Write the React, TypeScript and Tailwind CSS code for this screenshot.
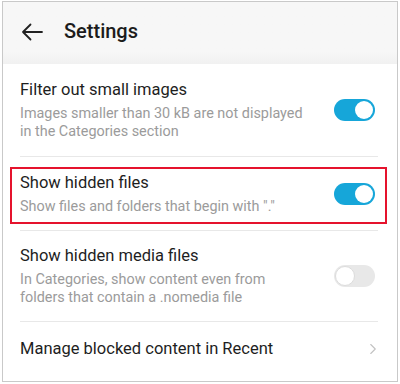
import { ChevronRight } from "lucide-react";

function Toggle({ on }: { on: boolean }) {
  return on ? (
    <div className="w-[41px] h-[22px] rounded-full bg-[#16a6d9] flex items-center justify-end pr-[2px]">
      <div className="w-[18px] h-[18px] rounded-full bg-white" />
    </div>
  ) : (
    <div className="w-[41px] h-[22px] rounded-full bg-[#e8e8e8] flex items-center pl-[1px]">
      <div className="w-[20px] h-[20px] rounded-full bg-white border border-[#dcdcdc]" />
    </div>
  );
}

function Text({ title, desc }: { title: string; desc?: string[] }) {
  return (
    <div className="flex-1 flex flex-col">
      <span className="text-[16.5px] leading-[22px] text-[#1e1e1e]">{title}</span>
      {desc && (
        <span className="text-[14.4px] leading-[18px] text-[#9b9b9b] mt-[4px]">
          {desc.map((d) => (
            <span key={d} className="block">
              {d}
            </span>
          ))}
        </span>
      )}
    </div>
  );
}

function Divider() {
  return <div className="ml-[10px] mr-[9px] h-px bg-[#e8e8e8]" />;
}

export default function App() {
  return (
    <div
      className="w-[400px] h-[384px] bg-white pt-[1px] pl-[2px]"
      style={{ fontFamily: "Roboto, 'Liberation Sans', sans-serif" }}
    >
      <div className="w-[396px] h-[381px] border border-[#c9c9c9] flex flex-col overflow-hidden">
        {/* Header */}
        <div className="h-[62px] bg-gradient-to-b from-[#f7f7f7] from-80% to-[#f1f1f1] flex items-center">
          <svg
            width="22"
            height="18"
            viewBox="0 0 22 18"
            className="ml-[18px] mt-[-2px]"
            fill="none"
            stroke="#222"
            strokeWidth="1.8"
            strokeLinecap="round"
            strokeLinejoin="round"
          >
            <path d="M21 9H2M9.5 1.5L2 9l7.5 7.5" />
          </svg>
          <span className="ml-[21px] text-[20px] font-medium text-[#1c1c1c] mt-[-4px]">Settings</span>
        </div>

        <div className="flex flex-col pl-[7px] pr-[10px]">
          <div className="h-[92px] flex items-center pl-[10px] pr-[12px]">
            <Text
              title="Filter out small images"
              desc={["Images smaller than 30 kB are not displayed", "in the Categories section"]}
            />
            <Toggle on />
          </div>
          <Divider />

          <div className="mt-[10px] h-[57px] border-2 border-[#e5132d] flex items-center pl-[8px] pr-[10px] pb-[3px]">
            <Text title="Show hidden files" desc={['Show files and folders that begin with "."']} />
            <Toggle on />
          </div>
          <div className="mt-[6px]">
            <Divider />
          </div>

          <div className="h-[90px] flex items-center pl-[10px] pr-[12px]">
            <Text
              title="Show hidden media files"
              desc={["In Categories, show content even from", "folders that contain a .nomedia file"]}
            />
            <Toggle on={false} />
          </div>
          <Divider />

          <div className="h-[54px] flex items-center pl-[10px] pr-[5px]">
            <Text title="Manage blocked content in Recent" />
            <ChevronRight size={18} strokeWidth={1.5} className="text-[#c2c2c2]" />
          </div>
        </div>
      </div>
    </div>
  );
}
